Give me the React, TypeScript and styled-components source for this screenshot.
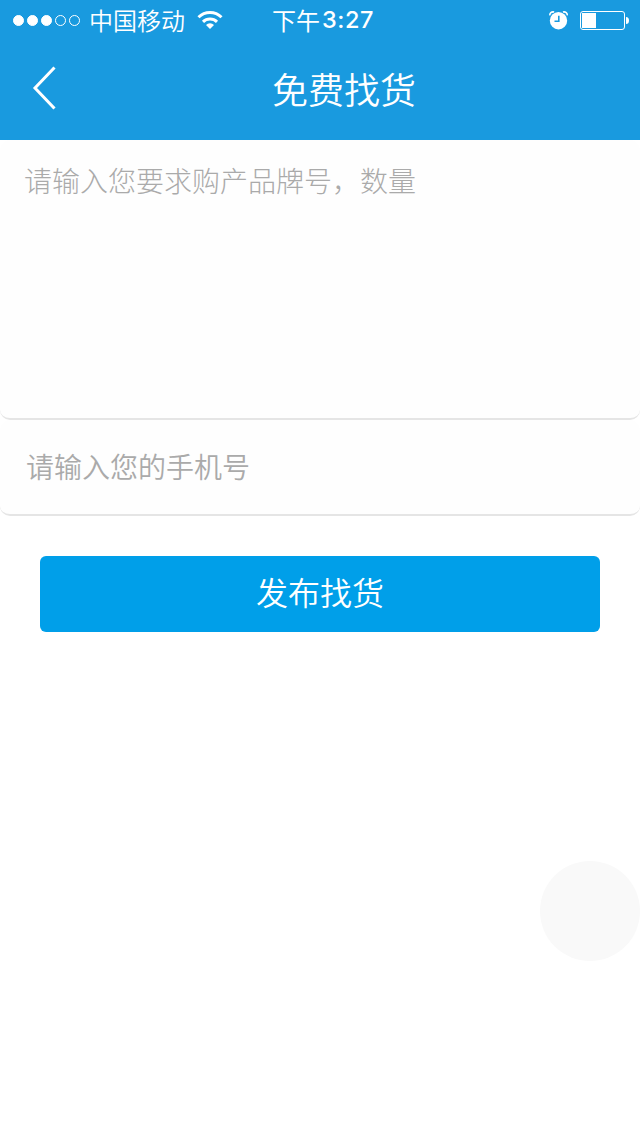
import React from 'react';
import styled, { createGlobalStyle } from 'styled-components';

const GlobalStyle = createGlobalStyle`
  * { box-sizing: border-box; }
  body {
    margin: 0;
    background: #fff;
    font-family: Inter, "Noto Sans CJK SC", sans-serif;
  }
`;

const Screen = styled.div`
  position: relative;
  width: 640px;
  height: 1136px;
  overflow: hidden;
  background: #fff;
`;

const Top = styled.header`
  height: 140px;
  background: #199adf;
  color: #fff;
`;

const StatusBar = styled.div`
  display: grid;
  grid-template-columns: 1fr auto 1fr;
  align-items: center;
  height: 40px;
  padding: 0 11px 0 13px;
`;

const Group = styled.div<{ $end?: boolean }>`
  display: flex;
  align-items: center;
  justify-content: ${(p) => (p.$end ? 'flex-end' : 'flex-start')};
`;

const Dots = styled.div`
  display: flex;
  gap: 3px;
`;

const Dot = styled.i<{ $on?: boolean }>`
  width: 11px;
  height: 11px;
  border: 1px solid #fff;
  border-radius: 50%;
  background: ${(p) => (p.$on ? '#fff' : 'transparent')};
`;

const Carrier = styled.span`
  margin: 0 12px 0 9px;
  font: 350 24px/40px "Noto Sans CJK SC", sans-serif;
`;

const Clock = styled.span`
  display: flex;
  gap: 2px;
  margin-left: 4px;
  font: 500 23.5px/40px Inter, "Noto Sans CJK SC", sans-serif;
  letter-spacing: 0.5px;
`;

const ClockPeriod = styled.span`
  font: 400 24px/40px "Noto Sans CJK SC", sans-serif;
  letter-spacing: 0;
`;

const NavBar = styled.nav`
  display: grid;
  grid-template-columns: 96px 1fr 48px;
  align-items: center;
  height: 100px;
`;

const Back = styled.button`
  display: flex;
  padding: 0 0 4px 30px;
  border: 0;
  background: none;
`;

const Title = styled.h1`
  margin: 0;
  padding-bottom: 4px;
  text-align: center;
  font: 350 36px/96px "Noto Sans CJK SC", sans-serif;
`;

const Form = styled.main`
  display: flex;
  flex-direction: column;
`;

const Field = styled.div<{ $height: number; $pad: string; $weight: number }>`
  height: ${(p) => p.$height}px;
  padding: ${(p) => p.$pad};
  border-bottom: 2px solid #e5e5e5;
  border-radius: 10px;
  background: #fefefe;
  color: #aaa;
  font: ${(p) => p.$weight} 28px/40px "Noto Sans CJK SC", sans-serif;
`;

const Submit = styled.button`
  height: 76px;
  margin: 40px 40px 0;
  padding: 0 0 6px;
  border: 0;
  border-radius: 6px;
  background: #009fe9;
  color: #fff;
  font: 350 32px/70px "Noto Sans CJK SC", sans-serif;
`;

const FloatingTouch = styled.div`
  position: absolute;
  right: 0;
  top: 861px;
  width: 100px;
  height: 100px;
  border-radius: 50%;
  background: #f9f9f9;
`;

const WifiIcon = () => (
  <svg width="26" height="20" viewBox="0 0 26 20" fill="none" stroke="#fff">
    <path d="M1.5 7.2a16.4 16.4 0 0 1 23 0" strokeWidth="3" />
    <path d="M6 11.9a10 10 0 0 1 14 0" strokeWidth="3" />
    <path d="M13 19l-4-4a5.6 5.6 0 0 1 8 0z" fill="#fff" stroke="none" />
  </svg>
);

const AlarmIcon = () => (
  <svg width="20" height="20" viewBox="0 0 20 20" fill="none">
    <circle cx="9.5" cy="10.7" r="8.7" fill="#fff" />
    <path d="M0.9 5.4C0.6 2.9 2.4 1.5 5.2 2M18.2 5.4c.3-2.5-1.5-3.9-4.3-3.4" stroke="#fff" strokeWidth="1.6" />
    <path d="M9.8 5.7v5.6H5.5" stroke="#199adf" strokeWidth="1.6" />
  </svg>
);

const BatteryIcon = () => (
  <svg width="49" height="20" viewBox="0 0 49 20" fill="none">
    <rect x="0.5" y="1.5" width="44" height="18" rx="2.5" stroke="#fff" />
    <rect x="2" y="3" width="14" height="15" fill="#fff" />
    <path d="M46 7q3 0 3 3.5T46 14z" fill="#fff" />
  </svg>
);

const AlarmSlot = styled.span`
  display: flex;
  margin-right: 11px;
`;

export default function App() {
  return (
    <Screen>
      <GlobalStyle />
      <Top>
        <StatusBar>
          <Group>
            <Dots>
              <Dot $on /><Dot $on /><Dot $on /><Dot /><Dot />
            </Dots>
            <Carrier>中国移动</Carrier>
            <WifiIcon />
          </Group>
          <Clock><ClockPeriod>下午</ClockPeriod>3:27</Clock>
          <Group $end>
            <AlarmSlot><AlarmIcon /></AlarmSlot>
            <BatteryIcon />
          </Group>
        </StatusBar>
        <NavBar>
          <Back aria-label="返回">
            <svg width="28" height="44" viewBox="0 0 28 44" fill="none" stroke="#fff" strokeWidth="3">
              <path d="M24.5 1.5L5 22L24.5 42.5" />
            </svg>
          </Back>
          <Title>免费找货</Title>
        </NavBar>
      </Top>
      <Form>
        <Field $height={280} $pad="20px 24px" $weight={200}>请输入您要求购产品牌号，数量</Field>
        <Field $height={96} $pad="26px 26px" $weight={350}>请输入您的手机号</Field>
        <Submit>发布找货</Submit>
      </Form>
      <FloatingTouch />
    </Screen>
  );
}
